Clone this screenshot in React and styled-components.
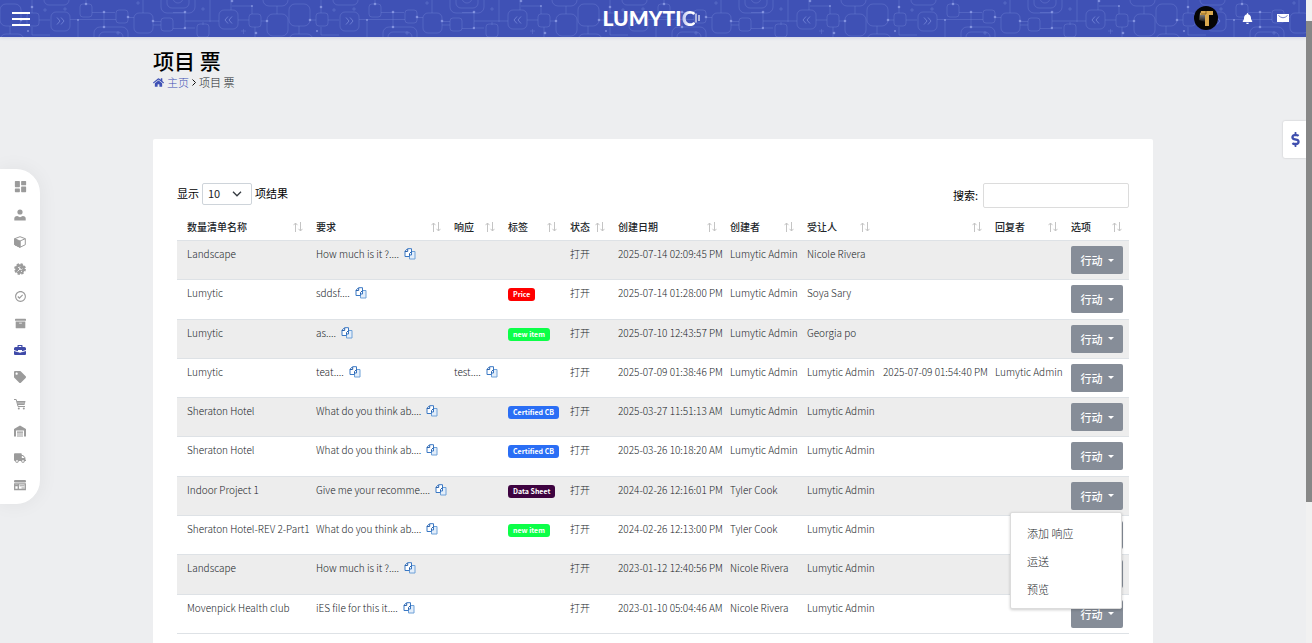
import React, { useState } from 'react';
import styled, { createGlobalStyle } from 'styled-components';
import {
  FaArchive,
  FaBell,
  FaDollarSign,
  FaHome,
  FaTag,
  FaTruck,
} from 'react-icons/fa';
import { BiCheckCircle, BiSolidDashboard } from 'react-icons/bi';

const GlobalStyle = createGlobalStyle`
  * {
    box-sizing: border-box;
  }
  body {
    margin: 0;
    background-color: #edeef0;
    color: #212529;
    font-family: "Noto Sans CJK SC", "Noto Sans", sans-serif;
    font-size: 11px;
    line-height: 16px;
  }
  button, input, select {
    font-family: inherit;
    font-size: inherit;
  }
`

const Page = styled.div`
  height: 100vh;
  overflow: hidden;
  padding-right: 6px;
`

const Header = styled.header`
  display: grid;
  grid-template-columns: 1fr auto 1fr;
  align-items: center;
  height: 37px;
  padding: 0 17px 1px 12px;
  background-color: #3f51b5;
  box-shadow: 0 1px 3px rgba(63, 81, 181, 0.15);
  position: relative;
  > * {
    position: relative;
  }
`

const Circuit = styled.svg`
  && {
    position: absolute;
  }
  top: 0;
  left: 0;
  width: 100%;
  height: 100%;
`

const MenuButton = styled.button`
  display: flex;
  flex-direction: column;
  gap: 4px;
  width: 18px;
  padding: 1px 0 0;
  border: none;
  background: transparent;
  span {
    height: 2px;
    background-color: white;
  }
`

const Logo = styled.a`
  display: flex;
  align-items: center;
  padding-left: 2px;
  color: white;
  font-family: Lato, sans-serif;
  font-size: 21px;
  font-weight: 900;
  line-height: 36px;
  text-decoration: none;
`

const LogoFade = styled.span`
  background: linear-gradient(90deg, #b9c2ee, white 60%);
  background-clip: text;
  color: transparent;
`

const HeaderActions = styled.div`
  display: flex;
  justify-content: flex-end;
  align-items: center;
  gap: 24px;
`

const HeaderButton = styled.button`
  display: flex;
  padding: 0;
  border: none;
  background: transparent;
  color: white;
`

const SideNav = styled.nav`
  position: fixed;
  top: 169px;
  left: 0;
  display: flex;
  flex-direction: column;
  justify-content: space-between;
  align-items: center;
  width: 40px;
  height: 335px;
  padding: 10px 0 13px;
  background-color: white;
  border-radius: 0 24px 24px 0;
  box-shadow: 0 0 20px rgba(0, 0, 0, 0.06);
`

const SideLink = styled.a`
  display: flex;
  color: ${({ $active }) => ($active ? '#3f4aa8' : '#9b9b9b')};
`

const CurrencyTab = styled.button`
  position: fixed;
  top: 121px;
  right: 6px;
  display: flex;
  justify-content: center;
  align-items: center;
  width: 23px;
  height: 37px;
  padding: 0 0 0 2px;
  border: none;
  border-radius: 2px 0 0 2px;
  background-color: white;
  box-shadow: 0 0 2px rgba(0, 0, 0, 0.2);
  color: #3f4fae;
`

const ScrollTrack = styled.div`
  position: fixed;
  top: 0;
  right: 0;
  bottom: 0;
  width: 6px;
  padding-top: 21px;
  background-color: #f1f1f1;
`

const ScrollThumb = styled.div`
  height: 481px;
  background-color: #878787;
`

const Content = styled.main`
  max-width: 1000px;
  margin: 0 auto;
  padding-top: 9px;
`

const Title = styled.h1`
  margin: 0;
  color: #000;
  font-size: 21px;
  font-weight: 500;
  line-height: 28px;
`

const Breadcrumb = styled.nav`
  display: flex;
  align-items: center;
  gap: 3px;
  height: 16px;
  font-weight: 300;
  a {
    display: flex;
    align-items: center;
    gap: 3px;
    color: #3f51b5;
    text-decoration: none;
  }
`

const Card = styled.section`
  margin-top: 49px;
  padding: 44px 24px 24px;
  background-color: white;
  border-radius: 2px;
`

const Toolbar = styled.div`
  display: flex;
  justify-content: space-between;
  align-items: flex-start;
`

const Field = styled.label`
  display: flex;
  align-items: center;
  gap: 3px;
  color: #000;
  line-height: 14px;
`

const FieldText = styled.span`
  padding-bottom: 2px;
`

const SelectBox = styled.span`
  display: flex;
  position: relative;
  select {
    appearance: none;
    width: 50px;
    height: 22px;
    padding: 0 5px 2px;
    border: 1px solid #ced4da;
    border-radius: 2px;
    background-color: white;
    color: #212529;
  }
  svg {
    position: absolute;
    top: 8px;
    right: 10px;
    pointer-events: none;
  }
`

const SearchInput = styled.input`
  width: 146px;
  height: 25px;
  margin-left: 2px;
  border: 1px solid #dcdcdc;
  border-radius: 2px;
  background-color: white;
`

const Table = styled.table`
  width: 100%;
  height: 426px;
  table-layout: fixed;
  border-collapse: separate;
  border-spacing: 0;
  font-size: 10px;
  white-space: nowrap;
  th:first-child, td:first-child {
    padding-left: 10px;
  }
`

const Th = styled.th`
  height: 33px;
  padding: 6px 7px 0 6px;
  border-bottom: 1px solid #dee2e6;
  color: #212529;
  font-weight: 500;
  text-align: left;
  div {
    display: flex;
    justify-content: space-between;
    align-items: center;
  }
`

const Row = styled.tr`
  &:nth-child(odd) {
    background-color: #ededed;
  }
`

const Td = styled.td`
  padding: 5px 0 5px 6px;
  border-bottom: 1px solid #dee2e6;
  color: #212529;
  font-weight: 300;
  vertical-align: top;
`

const CopyButton = styled.button`
  margin-left: 5px;
  padding: 0;
  border: none;
  background: transparent;
  vertical-align: -2px;
  line-height: 0;
`

const Badge = styled.span`
  display: inline-block;
  height: 13px;
  padding: 0 5px;
  border-radius: 3px;
  background-color: ${({ $color }) => $color};
  color: white;
  font-size: 7px;
  font-weight: 700;
  line-height: 13px;
`

const ActionBox = styled.div`
  display: inline-block;
  position: relative;
`

const ActionButton = styled.button`
  display: flex;
  align-items: center;
  justify-content: center;
  gap: 5px;
  width: 52px;
  height: 28px;
  padding: 0;
  border: none;
  border-radius: 2px;
  background-color: #868d98;
  color: white;
  font-size: 11px;
  font-weight: 500;
  &::after {
    content: "";
    border: 3px solid transparent;
    border-top-color: white;
    border-bottom: none;
  }
`

const Menu = styled.ul`
  position: absolute;
  z-index: 2;
  top: 30px;
  right: 1px;
  width: 112px;
  margin: 0;
  padding: 6px 0 5px;
  border: 1px solid #dcdcdc;
  border-radius: 2px;
  background-color: white;
  box-shadow: 0 1px 3px rgba(0, 0, 0, 0.2);
  list-style: none;
  a {
    display: block;
    padding: 0 16px;
    color: #212529;
    font-size: 11px;
    line-height: 28px;
    text-decoration: none;
  }
`

const colunas = [
  { nome: '数量清单名称', largura: 133 },
  { nome: '要求', largura: 138 },
  { nome: '响应', largura: 54 },
  { nome: '标签', largura: 62 },
  { nome: '状态', largura: 48 },
  { nome: '创建日期', largura: 112 },
  { nome: '创建者', largura: 77 },
  { nome: '受让人', largura: 76 },
  { nome: '', largura: 112 },
  { nome: '回复者', largura: 76 },
  { nome: '选项', largura: 64 },
]

const Col = styled.col`
  width: ${({ $largura }) => $largura}px;
`

const price = { text: 'Price', color: '#ff0000' }
const newItem = { text: 'new item', color: '#0cff48' }
const certified = { text: 'Certified CB', color: '#2a6ef5' }
const dataSheet = { text: 'Data Sheet', color: '#3e0340' }

const tickets = [
  { name: 'Landscape', request: 'How much is it ?....', created: '2025-07-14 02:09:45 PM', creator: 'Lumytic Admin', assignee: 'Nicole Rivera' },
  { name: 'Lumytic', request: 'sddsf....', tag: price, created: '2025-07-14 01:28:00 PM', creator: 'Lumytic Admin', assignee: 'Soya Sary' },
  { name: 'Lumytic', request: 'as....', tag: newItem, created: '2025-07-10 12:43:57 PM', creator: 'Lumytic Admin', assignee: 'Georgia po' },
  { name: 'Lumytic', request: 'teat....', response: 'test....', created: '2025-07-09 01:38:46 PM', creator: 'Lumytic Admin', assignee: 'Lumytic Admin', replied: '2025-07-09 01:54:40 PM', replier: 'Lumytic Admin' },
  { name: 'Sheraton Hotel', request: 'What do you think ab....', tag: certified, created: '2025-03-27 11:51:13 AM', creator: 'Lumytic Admin', assignee: 'Lumytic Admin' },
  { name: 'Sheraton Hotel', request: 'What do you think ab....', tag: certified, created: '2025-03-26 10:18:20 AM', creator: 'Lumytic Admin', assignee: 'Lumytic Admin' },
  { name: 'Indoor Project 1', request: 'Give me your recomme....', tag: dataSheet, created: '2024-02-26 12:16:01 PM', creator: 'Tyler Cook', assignee: 'Lumytic Admin' },
  { name: 'Sheraton Hotel-REV 2-Part1', request: 'What do you think ab....', tag: newItem, created: '2024-02-26 12:13:00 PM', creator: 'Tyler Cook', assignee: 'Lumytic Admin' },
  { name: 'Landscape', request: 'How much is it ?....', created: '2023-01-12 12:40:56 PM', creator: 'Nicole Rivera', assignee: 'Lumytic Admin' },
  { name: 'Movenpick Health club', request: 'iES file for this it....', created: '2023-01-10 05:04:46 AM', creator: 'Nicole Rivera', assignee: 'Lumytic Admin' },
]

// circuit drawing that repeats along the header
const HeaderPattern = () => (
  <Circuit aria-hidden="true">
    <defs>
      <pattern id="circuit" width="289" height="37" patternUnits="userSpaceOnUse" patternTransform="translate(50 0)">
        <g fill="none" stroke="#7f90e0" strokeOpacity="0.3">
          <rect x="1" y="12" width="19" height="19" rx="5" />
          <rect x="30" y="4" width="12" height="13" rx="3" />
          <rect x="66" y="10" width="12" height="13" rx="3" />
          <rect x="84" y="13" width="19" height="20" rx="5" />
          <rect x="111" y="18" width="12" height="13" rx="3" />
          <rect x="111" y="-12" width="34" height="25" rx="6" />
          <rect x="117" y="-12" width="22" height="20" rx="5" />
          <circle cx="128" cy="-2" r="5" />
          <rect x="44" y="27" width="34" height="25" rx="6" />
          <rect x="49" y="32" width="24" height="20" rx="5" />
          <rect x="147" y="24" width="12" height="13" rx="3" />
          <rect x="169" y="10" width="19" height="19" rx="5" />
          <rect x="199" y="14" width="12" height="13" rx="3" />
          <rect x="217" y="14" width="21" height="22" rx="6" />
          <rect x="239" y="4" width="21" height="22" rx="6" />
          <rect x="266" y="13" width="12" height="13" rx="3" />
          <rect x="213" y="-14" width="25" height="20" rx="6" />
          <rect x="239" y="34" width="24" height="20" rx="6" />
          <rect x="-6" y="-14" width="25" height="19" rx="5" />
          <rect x="283" y="-14" width="25" height="19" rx="5" />
          <path d="M36 0v4M42 12.500h23M54 12v16M20 19.500h46M28 20v17M93 0v13M78 17.500h6M103 21.500h8M123 12.500h12v16h-12M135 21h34M160 0v22M153 22v3M145 28h-8" />
          <path d="M181 0v10M182 6h20v8M211 21h6M205 27v10M227 6v8M260 20h6M271 0v13M249 26v8M278 20h11M271 27v8h18M188 20h11M111 25h-8" />
          <path d="M86 3h4M88 1v4M13 9h4M15 7v4M191 31h5M193.500 29v5M282 10h4M284 8v4M66 33h4M68 31v4M151 9h4M153 7v4" />
        </g>
        <g fill="none" stroke="#8b9ce6" strokeOpacity="0.55">
          <path d="M7 17.500l3 3.500-3 3.500M11 17.500l3 3.500-3 3.500M178 16.500l-3 3.500 3 3.500M182 16.500l-3 3.500 3 3.500" />
        </g>
        <g fill="#a4b2f3" fillOpacity="0.6">
          <circle cx="36" cy="4" r="1.300" />
          <circle cx="54" cy="12" r="1.300" />
          <circle cx="54" cy="27" r="1.300" />
          <circle cx="28" cy="20" r="1" />
          <circle cx="78" cy="17" r="1.300" />
          <circle cx="103" cy="21" r="1.300" />
          <circle cx="135" cy="12" r="1.300" />
          <circle cx="135" cy="28" r="1.300" />
          <circle cx="182" cy="1" r="1.300" />
          <circle cx="202" cy="6" r="1" />
          <circle cx="217" cy="21" r="1.300" />
          <circle cx="206" cy="33" r="1.300" />
          <circle cx="260" cy="20" r="1.300" />
          <circle cx="271" cy="7" r="1.300" />
          <circle cx="267" cy="31" r="1" />
        </g>
      </pattern>
    </defs>
    <rect width="100%" height="100%" fill="url(#circuit)" />
  </Circuit>
)

const LogoTail = () => (
  <svg width="5" height="12" viewBox="0 0 5 12" fill="none" stroke="white" aria-hidden="true">
    <path d="M1 1.500v9" strokeWidth="1.400" opacity="0.8" />
    <path d="M4 3v6" strokeWidth="1.200" />
  </svg>
)

const Avatar = () => (
  <svg width="24" height="24" viewBox="0 0 24 24" aria-hidden="true">
    <defs>
      <linearGradient id="brilho" x1="0" x2="0" y1="0" y2="1">
        <stop offset="0" stopColor="#999" />
        <stop offset="1" stopColor="#111" />
      </linearGradient>
    </defs>
    <circle cx="12" cy="12" r="12" fill="#050505" />
    <path d="M6 7h5v9L5 14z" fill="url(#brilho)" />
    <path d="M7 5h12v4h-4v11h-4V9H6z" fill="#d9a94e" />
    <path d="M12 5v3M7 8h5" stroke="#6b4c14" strokeWidth="0.700" />
  </svg>
)

const MailIcon = () => (
  <svg width="12" height="8" viewBox="0 0 12 8" aria-hidden="true">
    <rect width="12" height="8" fill="white" />
    <path d="M1.500 1.500Q6 6 10.500 1.500" fill="none" stroke="#3f51b5" strokeWidth="0.700" />
  </svg>
)

const CopyIcon = () => (
  <svg width="12" height="12" viewBox="0 0 12 12" fill="none" aria-hidden="true">
    <path d="M5.500 3.500h5.500v7.500H5.500z" fill="#e3eefa" stroke="#6ea1d8" />
    <path d="M3.500 0.700h4v6.300h-2v1.500H1V3.200z" fill="white" stroke="#3a78c4" />
    <path d="M3.700 1v2.500H1M5.500 7V5.500l2-2" stroke="#2b62ab" />
  </svg>
)

const SortIcon = () => (
  <svg width="10" height="10" viewBox="0 0 10 10" fill="none" stroke="#c4c4c4" aria-hidden="true">
    <path d="M2.500 10V1M0.500 3.200L2.500 1l2 2.200M7.500 0v9M5.500 6.800l2 2.200 2-2.200" />
  </svg>
)

const UserIcon = () => (
  <svg width="12" height="12" viewBox="0 0 12 12" fill="currentColor">
    <circle cx="6" cy="3" r="2.600" />
    <path d="M0.300 11.500V9.500Q0.300 7 3.300 7L6 8.200 8.700 7Q11.700 7 11.700 9.500v2z" />
  </svg>
)

const CubeIcon = () => (
  <svg width="12" height="12" viewBox="0 0 12 12" fill="none" stroke="currentColor">
    <path d="M6 0.700l5.300 2v6L6 11.300.700 8.700v-6zM6 5v6M6 5l5.300-2.300" />
    <path d="M.700 2.700L6 5v6.300L.700 8.700z" fill="currentColor" />
  </svg>
)

const ServiceIcon = () => (
  <svg width="12" height="12" viewBox="0 0 12 12">
    <circle cx="6" cy="6" r="4.800" fill="currentColor" />
    <circle cx="6" cy="6" r="5" fill="none" stroke="currentColor" strokeWidth="1.800" strokeDasharray="2.300 1.630" />
    <path d="M3.500 8.500l3-3M6 3.500a1.700 1.700 0 1 0 2.500 2.200M4 4.500h1M7 8.500h1" fill="none" stroke="white" strokeWidth="0.800" />
  </svg>
)

const BriefcaseIcon = () => (
  <svg width="12" height="12" viewBox="0 0 12 12" fill="currentColor">
    <path d="M3.500 3V1.500Q3.500 1 4 1h4q.500 0 .500.500V3h2q1.500 0 1.500 1.500V6L8 7.200V6H4v1.200L0 6V4.500Q0 3 1.500 3zM4.700 3h2.600v-.900H4.700z" />
    <path d="M0 7l4 1.200h1L6 9l1-.800h1L12 7v3q0 1-1 1H1q-1 0-1-1z" />
  </svg>
)

const CartIcon = () => (
  <svg width="12" height="12" viewBox="0 0 12 12" fill="none" stroke="currentColor">
    <path d="M0 1.500h2.200L4 8.500h7" />
    <path d="M2.800 3h8.700l-1 4H4z" fill="currentColor" stroke="none" />
    <path d="M4 5h6.500" stroke="white" strokeWidth="0.500" />
    <circle cx="4.800" cy="10.400" r="1" fill="currentColor" stroke="none" />
    <circle cx="9.800" cy="10.400" r="1" fill="currentColor" stroke="none" />
  </svg>
)

const WarehouseIcon = () => (
  <svg width="12" height="12" viewBox="0 0 12 12" fill="currentColor">
    <path d="M0 4l6-3.500L12 4v7.500h-2V5.500H2v6H0z" />
    <path d="M3 6.500h6v1.200H3zM3 8.500h6v1.100H3zM3 10.400h6v1.100H3z" />
  </svg>
)

const BrowserIcon = () => (
  <svg width="12" height="12" viewBox="0 0 12 12" fill="none" stroke="currentColor">
    <rect y="1" width="12" height="2.600" rx="1" fill="currentColor" stroke="none" />
    <path d="M.700 4.800h10.600v5.700H.700zM.700 6.500h3M4.300 4.800v5.700" strokeWidth="1.300" />
    <path d="M5.500 6.800h5M7.500 9h3" />
  </svg>
)

const sideItems = [
  { label: '仪表板', icon: <BiSolidDashboard size={15} /> },
  { label: '用户', icon: <UserIcon /> },
  { label: '产品', icon: <CubeIcon /> },
  { label: '服务', icon: <ServiceIcon /> },
  { label: '审批', icon: <BiCheckCircle size={13} /> },
  { label: '存档', icon: <FaArchive size={11} /> },
  { label: '项目', icon: <BriefcaseIcon />, active: true },
  { label: '标签', icon: <FaTag size={12} /> },
  { label: '购物车', icon: <CartIcon /> },
  { label: '仓库', icon: <WarehouseIcon /> },
  { label: '运输', icon: <FaTruck size={12} /> },
  { label: '页面', icon: <BrowserIcon /> },
]

const CopyText = ({ text }) => (
  <>
    {text}
    <CopyButton aria-label="复制"><CopyIcon /></CopyButton>
  </>
)

function Actions({ open, onToggle }) {
  return (
    <ActionBox>
      <ActionButton aria-expanded={open} onClick={onToggle}>行动</ActionButton>
      {open &&
        <Menu>
          <li><a href="#add">添加 响应</a></li>
          <li><a href="#ship">运送</a></li>
          <li><a href="#preview">预览</a></li>
        </Menu>
      }
    </ActionBox>
  )
}

export default function App() {
  const [openRow, setOpenRow] = useState(6)
  const [search, setSearch] = useState('')

  const toggleRow = (index) => {
    setOpenRow(openRow === index ? null : index)
  }

  return (
    <Page>
      <GlobalStyle />
      <Header>
        <HeaderPattern />
        <MenuButton aria-label="菜单"><span /><span /><span /></MenuButton>
        <Logo href="#home">LUMYTI<LogoFade>C</LogoFade><LogoTail /></Logo>
        <HeaderActions>
          <HeaderButton aria-label="账户"><Avatar /></HeaderButton>
          <HeaderButton aria-label="通知"><FaBell size={11} /></HeaderButton>
          <HeaderButton aria-label="邮件"><MailIcon /></HeaderButton>
        </HeaderActions>
      </Header>

      <SideNav>
        {sideItems.map((item) => (
          <SideLink key={item.label} href="#nav" aria-label={item.label} $active={item.active}>
            {item.icon}
          </SideLink>
        ))}
      </SideNav>

      <Content>
        <Title>项目 票</Title>
        <Breadcrumb>
          <a href="#home"><FaHome size={11} />主页</a>
          <svg width="4" height="7" viewBox="0 0 4 7" fill="none" stroke="#111" aria-hidden="true">
            <path d="M.500.500l3 3-3 3" />
          </svg>
          <span>项目 票</span>
        </Breadcrumb>

        <Card>
          <Toolbar>
            <Field>
              <FieldText>显示</FieldText>
              <SelectBox>
                <select defaultValue="10">
                  <option>10</option>
                  <option>25</option>
                  <option>50</option>
                </select>
                <svg width="10" height="6" viewBox="0 0 10 6" fill="none" stroke="#343a40" strokeWidth="1.300">
                  <path d="M1 .800l4 4 4-4" />
                </svg>
              </SelectBox>
              <FieldText>项结果</FieldText>
            </Field>
            <Field>
              <FieldText>搜索:</FieldText>
              <SearchInput type="search" value={search} onChange={(e) => setSearch(e.target.value)} />
            </Field>
          </Toolbar>

          <Table>
            <colgroup>
              {colunas.map((coluna, index) => <Col key={index} $largura={coluna.largura} />)}
            </colgroup>
            <thead>
              <tr>
                {colunas.map((coluna, index) => (
                  <Th key={index}><div><span>{coluna.nome}</span><SortIcon /></div></Th>
                ))}
              </tr>
            </thead>
            <tbody>
              {tickets.map((ticket, index) => (
                <Row key={index}>
                  <Td>{ticket.name}</Td>
                  <Td><CopyText text={ticket.request} /></Td>
                  <Td>{ticket.response && <CopyText text={ticket.response} />}</Td>
                  <Td>{ticket.tag && <Badge $color={ticket.tag.color}>{ticket.tag.text}</Badge>}</Td>
                  <Td>打开</Td>
                  <Td>{ticket.created}</Td>
                  <Td>{ticket.creator}</Td>
                  <Td>{ticket.assignee}</Td>
                  <Td>{ticket.replied}</Td>
                  <Td>{ticket.replier}</Td>
                  <Td>
                    <Actions open={openRow === index} onToggle={() => toggleRow(index)} />
                  </Td>
                </Row>
              ))}
            </tbody>
          </Table>
        </Card>
      </Content>

      <CurrencyTab aria-label="货币"><FaDollarSign size={15} /></CurrencyTab>
      <ScrollTrack><ScrollThumb /></ScrollTrack>
    </Page>
  )
}
